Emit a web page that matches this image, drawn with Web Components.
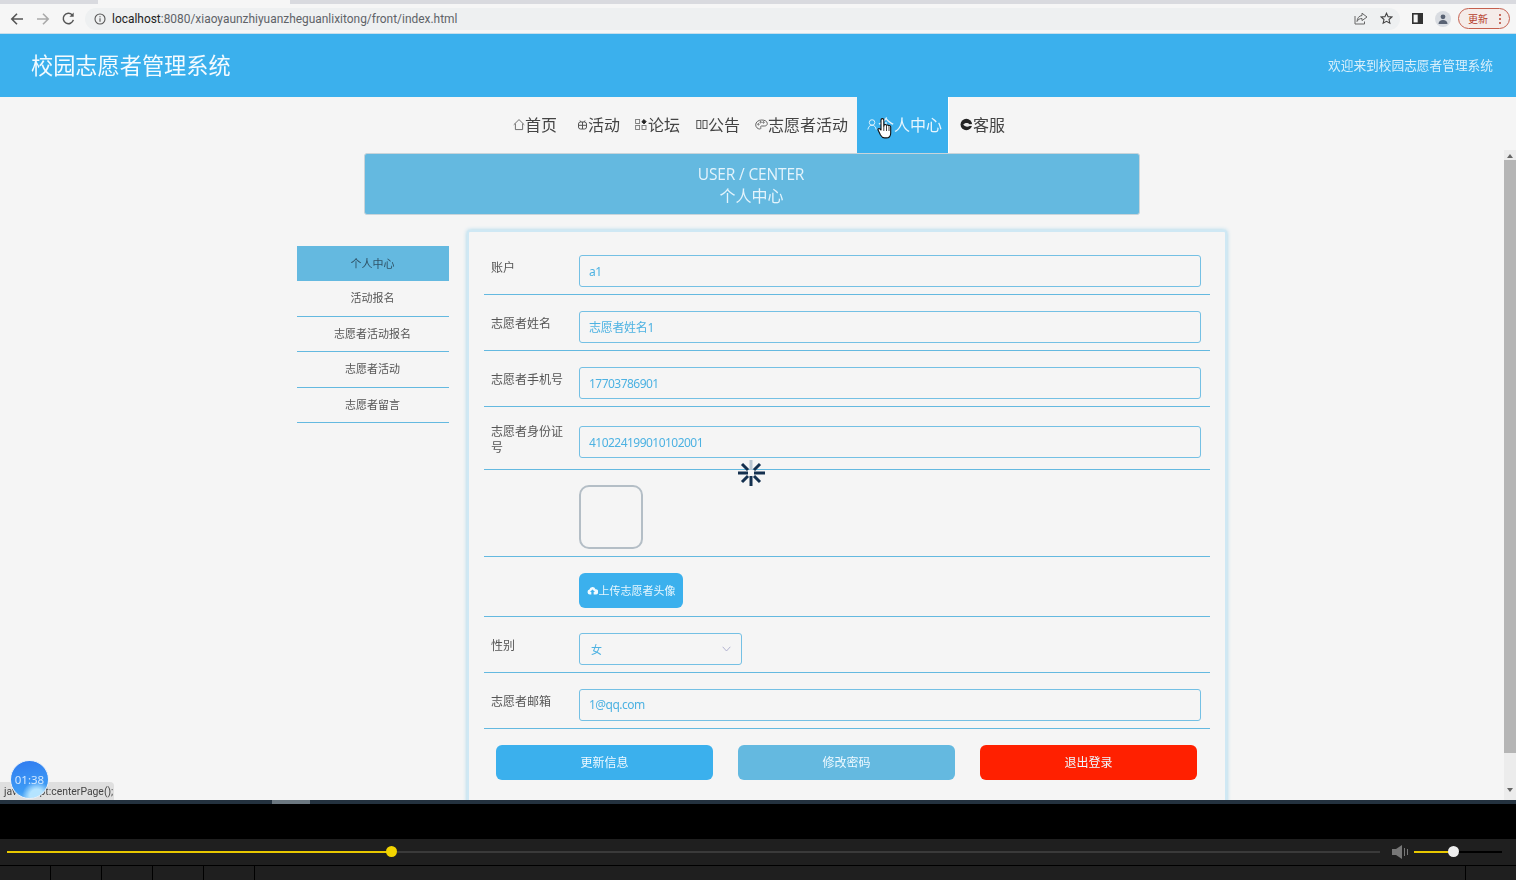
<!DOCTYPE html>
<html lang="zh"><head><meta charset="utf-8"><title>校园志愿者管理系统</title>
<style>
html,body{margin:0;padding:0;height:880px;overflow:hidden;background:#000}
body{font-family:"Noto Sans","Noto Sans CJK SC",sans-serif;display:flex;flex-direction:column;width:1516px}
</style></head><body>
<browser-bar></browser-bar>
<site-page>
  <site-header slot="header" title-text="校园志愿者管理系统" welcome="欢迎来到校园志愿者管理系统"></site-header>
  <nav-bar slot="nav">
    <nav-item icon="home" gap="0">首页</nav-item>
    <nav-item icon="gift" gap="20">活动</nav-item>
    <nav-item icon="apps" gap="15">论坛</nav-item>
    <nav-item icon="book" gap="16">公告</nav-item>
    <nav-item icon="palette" gap="15">志愿者活动</nav-item>
    <nav-item icon="user" gap="9" active>个人中心</nav-item>
    <nav-item icon="chat" gap="11">客服</nav-item>
  </nav-bar>
  <page-banner slot="banner" en="USER / CENTER" zh="个人中心"></page-banner>
  <side-menu slot="side">
    <side-item active>个人中心</side-item>
    <side-item>活动报名</side-item>
    <side-item>志愿者活动报名</side-item>
    <side-item>志愿者活动</side-item>
    <side-item>志愿者留言</side-item>
  </side-menu>
  <form-panel slot="main">
    <form-row label="账户"><text-box>a1</text-box></form-row>
    <form-row label="志愿者姓名"><text-box cjk>志愿者姓名1</text-box></form-row>
    <form-row label="志愿者手机号"><text-box>17703786901</text-box></form-row>
    <form-row label="志愿者身份证号" tall><text-box>410224199010102001</text-box></form-row>
    <form-row kind="image"><avatar-box></avatar-box></form-row>
    <form-row kind="upload"><upload-button>上传志愿者头像</upload-button></form-row>
    <form-row label="性别"><select-box>女</select-box></form-row>
    <form-row label="志愿者邮箱"><text-box>1@qq.com</text-box></form-row>
    <action-row>
      <action-button color="#3bb0ed">更新信息</action-button>
      <action-button color="#64b9e0">修改密码</action-button>
      <action-button color="#ff2000">退出登录</action-button>
    </action-row>
  </form-panel>
</site-page>
<player-bar></player-bar>

<script>
const def=(name,html)=>customElements.define(name,class extends HTMLElement{
  connectedCallback(){ if(this.shadowRoot) return; this.attachShadow({mode:'open'}).innerHTML=typeof html==='function'?html(this):html; }
});
const ICONS={
 home:'<svg width="12" height="13" viewBox="0 0 13 13" fill="none" stroke="#555" stroke-width=".9"><path d="M.8 6.800 6.500 1.200l5.700 5.600M2.600 5.600v6.400h7.800V5.600"/></svg>',
 gift:'<svg width="11" height="11" viewBox="0 0 11 11" fill="none" stroke="#555" stroke-width="1"><rect x="1.500" y="3" width="8" height="7" rx="2"/><path d="M1.500 6.300h8M5.500 3v7M4 3 3 1.500M7 3l1-1.500"/></svg>',
 apps:'<svg width="13" height="13" viewBox="0 0 13 13" fill="none" stroke="#777" stroke-width=".9"><rect x=".6" y="1.500" width="4" height="4"/><rect x=".6" y="7.500" width="4" height="4"/><rect x="7" y="7.500" width="4" height="4"/><path d="M9 1.500l2.200 2.200L9 5.900 6.800 3.700z" fill="#222" stroke="#222"/></svg>',
 book:'<svg width="12" height="11" viewBox="0 0 12 11" fill="none" stroke="#555" stroke-width="1"><rect x=".8" y="1.500" width="4" height="8"/><rect x="7" y="1.500" width="4" height="8"/></svg>',
 palette:'<svg width="13" height="13" viewBox="0 0 13 13" fill="none" stroke="#555" stroke-width=".9"><path d="M6.600 2C3.200 2 .7 4.200.7 6.800c0 2.400 2 4.200 4 4.200 1.400 0 1.300-1 1-1.700-.3-.8.2-1.300 1.100-1.300h2.600c1.700 0 2.900-.9 2.900-2.400C12.300 3.200 9.700 2 6.600 2z"/><circle cx="3.400" cy="6.300" r=".7"/><circle cx="5.600" cy="4.200" r=".7"/><circle cx="8.500" cy="4.400" r=".7"/></svg>',
 user:'<svg width="11" height="13" viewBox="0 0 12 13" fill="none" stroke="#eaf6fd" stroke-width="1"><circle cx="5.500" cy="4.300" r="3"/><path d="M1 12c.4-2.800 2-4.700 4.500-4.700S9.600 9.200 10 12"/></svg>',
 chat:'<svg width="13" height="13" viewBox="0 0 14 13"><circle cx="6.800" cy="6.500" r="6.200" fill="#222"/><path d="M3.500 6.500c1.300-2 5-2.300 6.800-.4l2.700-.1v2.200l-2.600-.2c-2 1.400-5.300 1-6.900-1.500z" fill="#e8e8e8"/></svg>'
};
const FONT='font-family:"Noto Sans","Noto Sans CJK SC",sans-serif;';

def('browser-bar',`<style>
:host{display:block;height:34px;flex:none;background:#f6f6f6;${FONT}}
.tabs{height:4px;background:#d9dadf;display:flex}
.tab{margin-left:98px;width:192px;background:#f6f6f6}
.tool{height:29px;display:flex;align-items:center;border-bottom:1px solid #c9dfec}
.l{display:flex;align-items:center;gap:10px;padding-left:9px;width:85px;box-sizing:border-box;flex:none}
.addr{height:22px;width:1315px;background:#eef0f1;border-radius:11px;display:flex;align-items:center;padding:0 7px 0 9px;box-sizing:border-box;flex:none}
.url{margin-left:6px;font:11.930px "Roboto",sans-serif;color:#5f6368;white-space:nowrap;flex:1}
.url b{font-weight:400;color:#222}
.ar{display:flex;gap:12px;align-items:center}
.r{display:flex;align-items:center;margin-left:12px;gap:12px}
.avatar{width:16px;height:16px;border-radius:50%;background:#d9dce1;display:flex;align-items:center;justify-content:center}
.upd{width:52px;height:21px;border:1px solid #c5604f;border-radius:11px;box-sizing:border-box;display:flex;align-items:center;justify-content:space-between;padding:0 8px 0 9px;font:10px "Noto Sans CJK SC",sans-serif;color:#b6402e;background:#f5ece9;margin-left:-5px}
.dots{display:flex;flex-direction:column;gap:2px}
.dots i{width:2px;height:2px;background:#b6402e;border-radius:50%}
</style>
<div class="tabs"><div class="tab"></div></div>
<div class="tool">
 <div class="l">
  <svg width="16" height="16" viewBox="0 0 16 16" fill="none" stroke="#555" stroke-width="1.600"><path d="M14 8H3M8 2.800 2.800 8 8 13.200"/></svg>
  <svg width="16" height="16" viewBox="0 0 16 16" fill="none" stroke="#aaa" stroke-width="1.600"><path d="M2 8h11M8 2.800 13.200 8 8 13.200"/></svg>
  <svg width="15" height="15" viewBox="0 0 16 16" fill="none" stroke="#555" stroke-width="1.600"><path d="M13.200 9.500A5.500 5.500 0 1 1 12 4.300"/><path d="M13.500 1.500v4.500H9" fill="#555" stroke="none"/></svg>
 </div>
 <div class="addr">
  <svg width="12" height="12" viewBox="0 0 12 12" fill="none" stroke="#555" stroke-width="1.100"><circle cx="6" cy="6" r="5"/><path d="M6 5.200v3.500M6 3.200v1"/></svg>
  <span class="url"><b>localhost</b>:8080/xiaoyaunzhiyuanzheguanlixitong/front/index.html</span>
  <div class="ar">
   <svg width="14" height="13" viewBox="0 0 14 13" fill="none" stroke="#666" stroke-width="1"><path d="M8 1.200 13 5 8 8.600V6.500C5.500 6.500 4 7.500 3 9.500 3.300 6 5 3.800 8 3.500zM1 4v8h9.500v-2.500"/></svg>
   <svg width="13" height="13" viewBox="0 0 14 14" fill="none" stroke="#444" stroke-width="1.200"><path d="m7 1.300 1.700 3.700 4 .4-3 2.700.9 4L7 10l-3.600 2.100.9-4-3-2.700 4-.4z"/></svg>
  </div>
 </div>
 <div class="r">
  <svg width="11" height="11" viewBox="0 0 11 11" fill="none" stroke="#333" stroke-width="1.600"><rect x=".8" y=".8" width="9.400" height="9.400"/><rect x="6.500" y="1" width="3.500" height="9" fill="#333"/></svg>
  <div class="avatar"><svg width="10" height="10" viewBox="0 0 10 10" fill="#596273"><circle cx="5" cy="2.800" r="2.400"/><path d="M.5 10c0-2.800 2-4 4.500-4s4.500 1.200 4.500 4z"/></svg></div>
  <div class="upd"><span>更新</span><span class="dots"><i></i><i></i><i></i></span></div>
 </div>
</div>`);

def('site-page',`<style>
:host{display:block;height:766px;flex:none;background:#f5f5f5;position:relative;overflow:hidden;color:#444;filter:blur(.3px)}
.scroll{width:1504px;display:flex;flex-direction:column;align-items:stretch}
.body{display:flex;gap:18px;padding:15px 0 0 297px;align-items:flex-start}
.sb{position:absolute;right:0;top:116px;bottom:0;width:12px;background:#ececec;display:flex;flex-direction:column;align-items:center}
.up,.dn{height:8px;flex:none;display:flex;align-items:center;justify-content:center}
.up{margin-top:2px}
.up i{border:3px solid transparent;border-top:0;border-bottom:4px solid #666}
.dn i{border:3px solid transparent;border-bottom:0;border-top:4px solid #666}
.th{width:12px;height:593px;background:#b5b5b5;flex:none}
.gap{flex:1}
</style>
<div class="scroll">
 <slot name="header"></slot><slot name="nav"></slot><slot name="banner"></slot>
 <div class="body"><slot name="side"></slot><slot name="main"></slot></div>
</div>
<div class="sb"><div class="up"><i></i></div><div class="th"></div><div class="gap"></div><div class="dn"><i></i></div><div style="height:6px"></div></div>
<load-spinner></load-spinner>
<hand-cursor></hand-cursor>
<status-tip>javascript:centerPage();</status-tip>
<timer-badge>01:38</timer-badge>`);

def('site-header',h=>`<style>
:host{display:flex;width:1516px;height:63px;box-sizing:border-box;background:#3bb0ed;align-items:center;justify-content:space-between;padding:0 23px 2px 31px;color:#fff}
h1{margin:0;font:400 22.200px/1 "Noto Sans CJK SC",sans-serif;color:#f4fbff}
span{font:400 12.700px "Noto Sans CJK SC",sans-serif;color:#d8effb}
</style><h1>${h.getAttribute('title-text')}</h1><span>${h.getAttribute('welcome')}</span>`);

def('nav-bar',`<style>:host{display:flex;height:56px;justify-content:flex-start;padding-left:513px;box-sizing:border-box;align-items:stretch}</style><slot></slot>`);

def('nav-item',h=>{
 const a=h.hasAttribute('active');const g=+h.getAttribute('gap');
 return `<style>
:host{display:flex;align-items:center;padding-bottom:2px;box-sizing:border-box;margin-left:${g}px;${a?'padding-left:10px;padding-right:6px;background:#3bb0ed;color:#e8f6fe;border-right:1px solid #fff;':'color:#444;'}font:400 16px "Noto Sans CJK SC",sans-serif;white-space:nowrap}
svg{display:block;margin-top:1px}
</style>${ICONS[h.getAttribute('icon')]}<slot></slot>`});

def('page-banner',h=>`<style>
:host{display:block;width:776px;height:62px;margin-left:364px;box-sizing:border-box;background:#64b9e0;border:1px solid #c8d4da;border-radius:3px;text-align:center;color:#e4f4fc;padding-top:9px}
.en{font:400 15.500px/22px "Open Sans","Noto Sans",sans-serif;letter-spacing:-.15px;margin-left:-2px}
.zh{font:400 16px/21px "Noto Sans CJK SC",sans-serif;margin-left:-1px}
</style><div class="en">${h.getAttribute('en')}</div><div class="zh">${h.getAttribute('zh')}</div>`);

def('side-menu',`<style>:host{display:block;width:152px;margin-top:16px;flex:none}</style><slot></slot>`);
def('side-item',h=>`<style>
:host{display:flex;height:${h.hasAttribute('active')?35:35.500}px;box-sizing:border-box;align-items:center;justify-content:center;padding:0 1px 2px 0;font:400 11px "Noto Sans CJK SC",sans-serif;color:#555;${h.hasAttribute('active')?'background:#64b9e0;color:#2f5266;':'border-bottom:1px solid #64b9e0;'}}
</style><slot></slot>`);

def('form-panel',`<style>:host{display:block;width:760px;height:600px;box-sizing:border-box;background:#f5f5f5;border:2px solid #cfe8f4;box-shadow:0 0 4px #9fd3ea;border-radius:3px;padding:7px 15px 0 15px;flex:none}</style><slot></slot>`);

def('form-row',h=>{
 const k=h.getAttribute('kind');const tall=h.hasAttribute('tall');
 const top=tall?19:(k==='image'?15:16);const bot=tall?11:(k==='upload'?8:7);
 const label=h.getAttribute('label')||'';
 const lt=tall?0:4;
 return `<style>
:host{display:flex;box-sizing:border-box;padding:${top}px 8px ${bot}px 7px;border-bottom:1px solid #64b9e0;position:relative}
.lb{width:88px;flex:none;font:400 12px/16px "Noto Sans CJK SC",sans-serif;color:#555;padding:${lt}px 8px 0 0;box-sizing:border-box;${tall?'margin-top:-3px;':''}}
.c{flex:1;min-width:0}
</style><div class="lb">${label}</div><div class="c"><slot></slot></div>`});

const boxCss=`box-sizing:border-box;height:32px;border:1px solid #74c0e4;border-radius:3px;display:flex;align-items:center;font:400 12px "Noto Sans","Noto Sans CJK SC",sans-serif;color:#4db2e2;`;
def('text-box',h=>{const c=h.hasAttribute('cjk');return `<style>:host{${boxCss}width:622px;padding:0 9px ${c?1:0}px;letter-spacing:${c?'-.3':'-.53'}px}</style><span><slot></slot></span>`});
def('select-box',`<style>:host{${boxCss}width:163px;justify-content:space-between;padding:0 10px 0 11px;height:31.500px;font-size:11px}</style><span><slot></slot></span><svg width="9" height="6" viewBox="0 0 9 6" fill="none" stroke="#aac" stroke-width=".9"><path d="M.7.800 4.500 5 8.300.800"/></svg>`);
def('avatar-box',`<style>:host{display:block;width:64px;height:64px;box-sizing:border-box;border:2px solid #b4bec6;border-radius:10px;background:#f5f5f5}</style>`);
def('upload-button',`<style>:host{display:flex;width:104px;height:35px;border-radius:6px;background:#3bb0ed;align-items:center;justify-content:center;padding-bottom:2px;box-sizing:border-box;color:#e6f6fe;font:400 11px "Noto Sans CJK SC",sans-serif;gap:1px}svg{margin-top:1px}</style><svg width="11" height="9" viewBox="0 0 12 10" fill="#f1faff"><path d="M3 9.500A2.800 2.800 0 0 1 2.600 4 3.500 3.500 0 0 1 9.300 3.500 3 3 0 0 1 9.500 9.500H7.300V6.800h1.500L6 3.800 3.200 6.800h1.500v2.700z"/></svg><slot></slot>`);
def('action-row',`<style>:host{display:flex;gap:25px;padding:16px 0 0 12px}</style><slot></slot>`);
def('action-button',h=>`<style>:host{display:flex;width:217px;height:35px;border-radius:6px;background:${h.getAttribute('color')};align-items:center;justify-content:center;padding-bottom:1px;box-sizing:border-box;color:#eef9ff;font:400 12px "Noto Sans CJK SC",sans-serif}</style><slot></slot>`);

/* overlays */
def('load-spinner',`<style>:host{position:absolute;left:737px;top:425px;width:28px;height:28px}</style><svg width="28" height="28" viewBox="0 0 28 28" stroke="#14304f" stroke-width="3"><path d="M14 1v10" stroke="#b9c6d2"/><path d="M23 5 17 11M28 14H17M23 23 17 17M14 27V17M5 23 11 17M1 14H11" /><path d="M5 5 11 11" stroke="#14304f"/></svg>`);
def('hand-cursor',`<style>:host{position:absolute;left:877px;top:83px;width:15px;height:22px}</style><svg width="15" height="22" viewBox="0 0 15 22"><path d="M4 13V3a1.400 1.400 0 0 1 2.800 0v6l.4-1a1.300 1.300 0 0 1 2.300.4 1.300 1.300 0 0 1 2.200.6 1.200 1.200 0 0 1 2 .9v6c0 3-1.400 5-4.500 5H7.500c-2 0-3-1-4-2.800L1.200 13.300c-.7-1.300.8-2.500 1.800-1.300z" fill="#fff" stroke="#111" stroke-width="1.100" stroke-linejoin="round"/><path d="M6.800 9v5M9.500 9v5M12 10v4" stroke="#111" stroke-width=".8" fill="none"/></svg>`);
def('status-tip',`<style>:host{position:absolute;left:0;bottom:0;height:18px;width:114px;box-sizing:border-box;padding:1px 0 0 4px;background:#dfdfdf;border-radius:0 4px 0 0;font:400 10.400px/18px "Roboto",sans-serif;color:#444;white-space:nowrap;overflow:hidden}</style><slot></slot>`);
def('timer-badge',`<style>:host{position:absolute;left:10px;top:726px;width:39px;height:39px;box-sizing:border-box;padding-bottom:1px;border:1.500px solid #e8f0f8;border-radius:50%;background:radial-gradient(circle at 70% 95%,#b5e4ff 0 16%,transparent 34%),linear-gradient(170deg,#2f7bf0 0%,#3e9cf5 75%,#6dbcf8 100%);color:#cfe6ff;display:flex;align-items:center;justify-content:center;font:400 11.500px "Noto Sans",sans-serif;z-index:2}</style><slot></slot>`);

def('player-bar',`<style>
:host{display:block;height:80px;flex:none;background:#000;position:relative}
.line{height:4px;background:#24323f;position:relative}
.line i{position:absolute;left:272px;width:38px;top:0;height:4px;background:#6b7780}
.gap{height:35px}
.bar{height:26px;background:#1f1f1f;display:flex;align-items:center;padding-left:7px;position:relative}
.track{width:1373px;height:2px;background:#3a3a3a;position:relative}
.fill{position:absolute;left:0;top:0;height:2px;width:384px;background:#e8c800}
.knob{position:absolute;left:379px;top:-5px;width:11px;height:11px;border-radius:50%;background:#f2d400}
.vol{position:absolute;left:1392px;top:6px}
.vt{position:absolute;left:1414px;top:12px;width:88px;height:2px;background:#000}
.vf{position:absolute;left:0;top:0;width:36px;height:2px;background:#e8c800}
.vk{position:absolute;left:34px;top:-5px;width:11px;height:11px;border-radius:50%;background:#eee}
.segs{height:15px;display:flex;background:#1f1f1f;border-top:1px solid #000;box-sizing:border-box}
.segs i{width:50px;border-right:1px solid #000;flex:none}
.segs .w{width:1210px}
</style>
<div class="line"><i></i></div><div class="gap"></div>
<div class="bar"><div class="track"><div class="fill"></div><div class="knob"></div></div>
<svg class="vol" width="16" height="14" viewBox="0 0 16 14" fill="#777"><path d="M0 4h4l6-4v14l-6-4H0z"/><path d="M12 3h1v8h-1zM15 4h1v6h-1z"/></svg>
<div class="vt"><div class="vf"></div><div class="vk"></div></div></div>
<div class="segs"><i></i><i></i><i></i><i></i><i></i><i class="w"></i></div>`);
</script>
</body></html>
